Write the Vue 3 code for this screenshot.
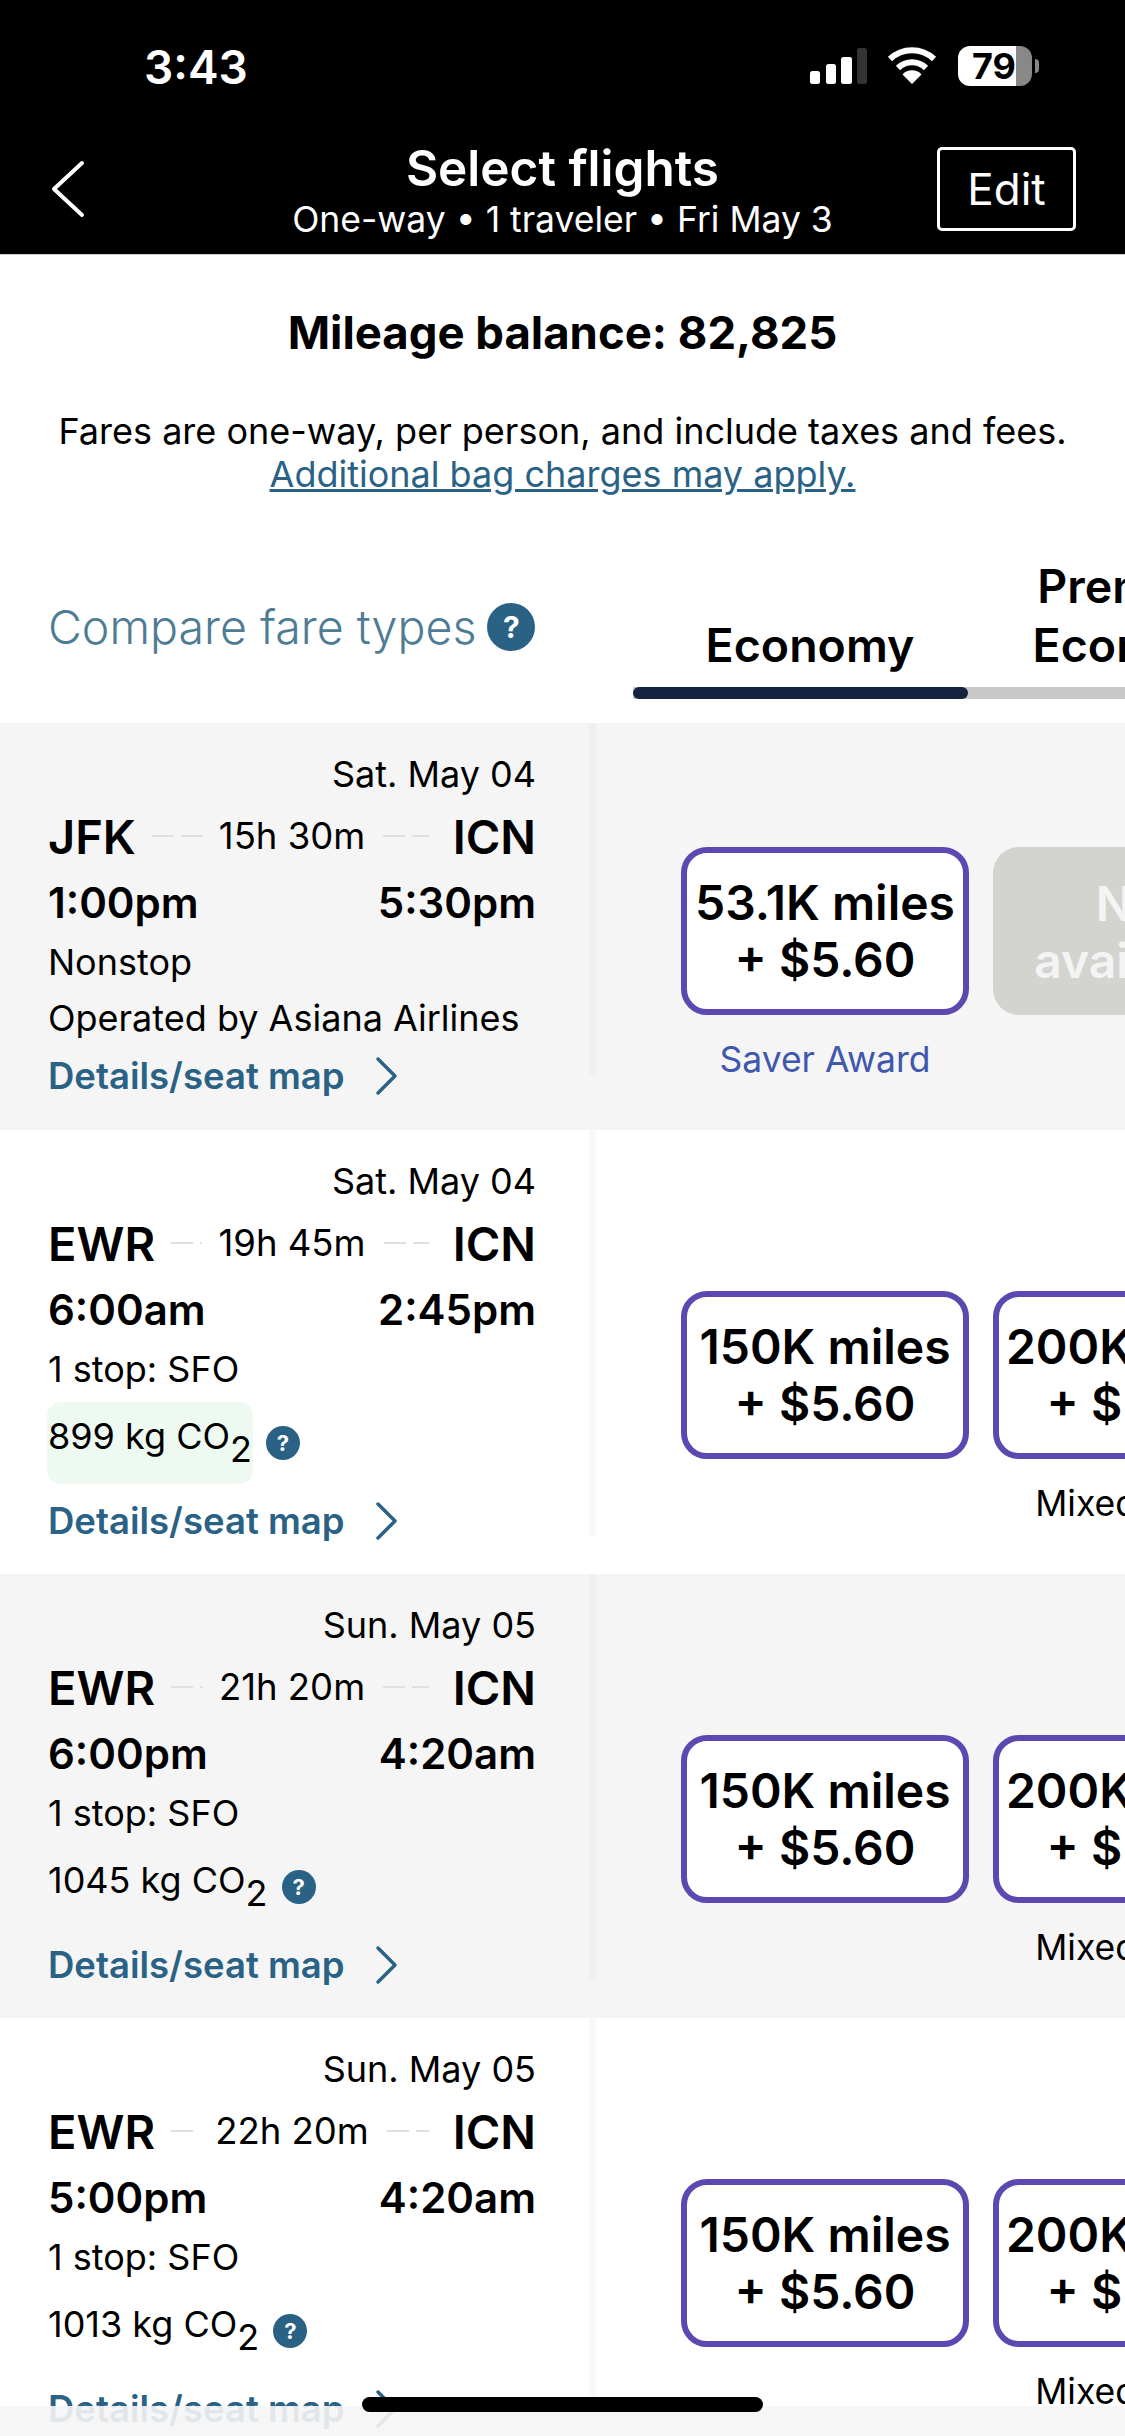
<script setup>
const flights = [
  { date: "Sat. May 04", from: "JFK", dur: "15h 30m", to: "ICN", dep: "1:00pm", arr: "5:30pm", stops: "Nonstop", operated: "Operated by Asiana Airlines",
    fares: [{ miles: "53.1K miles", label: "Saver Award", labelClass: "saver" }, { na: true }] },
  { date: "Sat. May 04", from: "EWR", dur: "19h 45m", to: "ICN", dep: "6:00am", arr: "2:45pm", stops: "1 stop: SFO", co2: "899", low: true,
    fares: [{ miles: "150K miles" }, { miles: "200K miles", label: "Mixed cabin" }] },
  { date: "Sun. May 05", from: "EWR", dur: "21h 20m", to: "ICN", dep: "6:00pm", arr: "4:20am", stops: "1 stop: SFO", co2: "1045",
    fares: [{ miles: "150K miles" }, { miles: "200K miles", label: "Mixed cabin" }] },
  { date: "Sun. May 05", from: "EWR", dur: "22h 20m", to: "ICN", dep: "5:00pm", arr: "4:20am", stops: "1 stop: SFO", co2: "1013",
    fares: [{ miles: "150K miles" }, { miles: "200K miles", label: "Mixed cabin" }] },
];
</script>

<template>
  <div class="page">
    <header class="top">
      <div class="status">
        <span class="clock">3:43</span>
        <div class="statusIcons">
          <svg class="signal" width="57" height="36" viewBox="0 0 57 36">
            <rect x="0" y="23" width="10" height="13" rx="2.5" fill="#fff" />
            <rect x="16" y="16" width="10" height="20" rx="2.5" fill="#fff" />
            <rect x="31" y="9" width="11" height="27" rx="2.5" fill="#fff" />
            <rect x="47" y="0" width="10" height="36" rx="2.5" fill="#333" />
          </svg>
          <svg class="wifi" width="50" height="37" viewBox="0 0 50 37">
            <path d="M3 12 A 32 32 0 0 1 47 12" fill="none" stroke="#fff" stroke-width="6" />
            <path d="M11 21 A 20 20 0 0 1 39 21" fill="none" stroke="#fff" stroke-width="6" />
            <path d="M25 37 L15.5 27.5 A 13 13 0 0 1 34.5 27.5 Z" fill="#fff" />
          </svg>
          <div class="battery">
            <div class="batteryBody"><span>79</span></div>
            <div class="batteryCap"></div>
          </div>
        </div>
      </div>
      <div class="nav">
        <svg class="back" width="34" height="58" viewBox="0 0 34 58">
          <path d="M31 3 L3 29 L31 55" fill="none" stroke="#fff" stroke-width="4" stroke-linecap="round" stroke-linejoin="round" />
        </svg>
        <div class="navTitle">
          <div class="title">Select flights</div>
          <div class="subtitle">One-way • 1 traveler • Fri May 3</div>
        </div>
        <div class="editWrap"><button class="edit">Edit</button></div>
      </div>
    </header>

    <section class="intro">
      <div class="balance">Mileage balance: 82,825</div>
      <p class="note">Fares are one-way, per person, and include taxes and fees.</p>
      <a class="bag">Additional bag charges may apply.</a>
    </section>

    <section class="tabsRow">
      <div class="compare">
        <span>Compare fare types</span>
        <span class="help bigHelp">?</span>
      </div>
      <div class="tabsCol">
        <div class="tabs">
          <div class="tab first">Economy</div>
          <div class="tab second">Premium<br />Economy</div>
        </div>
        <div class="bar"><div class="barFill"></div></div>
      </div>
    </section>

    <div
      v-for="(f, i) in flights"
      :key="i"
      :class="['row', i % 2 == 0 ? 'grey' : '', f.operated ? 'short' : '']"
    >
      <div class="info">
        <div class="date">{{ f.date }}</div>
        <div class="route">
          <div class="side">
            <span class="code">{{ f.from }}</span>
            <span class="dash"></span>
          </div>
          <span class="dur">{{ f.dur }}</span>
          <div class="side">
            <span class="dash dashRight"></span>
            <span class="code">{{ f.to }}</span>
          </div>
        </div>
        <div class="times"><span>{{ f.dep }}</span><span>{{ f.arr }}</span></div>
        <div class="line">{{ f.stops }}</div>
        <div v-if="f.operated" class="line">{{ f.operated }}</div>
        <div v-else class="co2Row">
          <div :class="['co2', f.low ? 'low' : '']">{{ f.co2 }} kg CO<span class="sub">2</span></div>
          <span class="help">?</span>
        </div>
        <div class="details">
          <span>Details/seat map</span>
          <svg width="24" height="40" viewBox="0 0 24 40">
            <path d="M3 3 L20 20 L3 37" fill="none" stroke="#2a6285" stroke-width="3.5" stroke-linecap="round" stroke-linejoin="round" />
          </svg>
        </div>
      </div>
      <div class="divider"></div>
      <div class="fares">
        <div v-for="(fare, j) in f.fares" :key="j" class="fare">
          <div v-if="fare.na" class="price na">Not<br />available</div>
          <div v-else class="price">{{ fare.miles }}<br />+ $5.60</div>
          <div :class="['fareLabel', fare.labelClass]">{{ fare.label }}</div>
        </div>
      </div>
    </div>

    <div class="bottomSheet"></div>
    <div class="homeBar"></div>
  </div>
</template>

<style scoped>
.page {
  position: relative;
  width: 1125px;
  height: 2436px;
  overflow: hidden;
  background: #fff;
  color: #000;
  font-family: Inter, "Liberation Sans", sans-serif;
}

.top {
  height: 255px;
  background: #000;
  color: #fff;
  border-bottom: 1px solid #ccc;
  box-sizing: border-box;
}

.status {
  height: 138px;
  display: flex;
  justify-content: space-between;
  padding: 46px 86px 0 144px;
  box-sizing: border-box;
}

.clock {
  font-size: 46px;
  font-weight: 600;
  line-height: 42px;
}

.statusIcons {
  display: flex;
  align-items: flex-start;
}

.signal {
  margin-top: 2px;
}

.wifi {
  margin-top: 1px;
  margin-left: 20px;
}

.battery {
  margin-left: 21px;
  display: flex;
  align-items: center;
}

.batteryBody {
  width: 74px;
  height: 40px;
  border-radius: 12px;
  background: linear-gradient(to right, #fff 58px, #888 58px);
  color: #000;
  font-size: 36px;
  font-weight: 700;
  line-height: 40px;
  padding-left: 14px;
  box-sizing: border-box;
}

.batteryCap {
  width: 4px;
  height: 14px;
  margin-left: 3px;
  border-radius: 0 4px 4px 0;
  background: #888;
}

.nav {
  display: grid;
  grid-template-columns: 1fr auto 1fr;
  align-items: start;
  padding: 0 49px;
}

.back {
  margin-top: 22px;
  margin-left: 2px;
}

.navTitle {
  text-align: center;
}

.title {
  font-size: 49.5px;
  font-weight: 600;
  line-height: 60px;
}

.subtitle {
  font-size: 35.5px;
  line-height: 44px;
  white-space: nowrap;
}

.editWrap {
  display: flex;
  justify-content: flex-end;
  margin-top: 9px;
}

.edit {
  width: 139px;
  height: 84px;
  background: none;
  border: 3px solid #fff;
  border-radius: 5px;
  color: #fff;
  font-family: inherit;
  font-size: 44px;
  padding: 0;
}

.intro {
  text-align: center;
  padding-top: 48px;
}

.balance {
  font-size: 45.5px;
  font-weight: 700;
  line-height: 60px;
}

.note {
  margin: 47px 0 0;
  font-size: 36px;
  line-height: 43px;
}

.bag {
  display: block;
  font-size: 36px;
  line-height: 43px;
  color: #2a6285;
  text-decoration: underline;
}

.tabsRow {
  display: flex;
  height: 227px;
}

.compare {
  width: 633px;
  flex-shrink: 0;
  box-sizing: border-box;
  padding: 34px 0 0 48px;
  display: flex;
  align-items: center;
  gap: 11px;
  font-size: 46.5px;
  font-weight: 300;
  color: #4f7c95;
}

.help {
  display: inline-flex;
  align-items: center;
  justify-content: center;
  width: 34px;
  height: 34px;
  border-radius: 50%;
  background: #2a6285;
  color: #fff;
  font-size: 22px;
  font-weight: 700;
  flex-shrink: 0;
}

.bigHelp {
  width: 48px;
  height: 48px;
  font-size: 30px;
}

.tabsCol {
  flex-shrink: 0;
  width: 492px;
  display: flex;
  flex-direction: column;
  justify-content: flex-end;
  padding-bottom: 24px;
  box-sizing: border-box;
}

.tabs {
  display: flex;
  align-items: flex-end;
  margin-bottom: 12px;
}

.tab {
  flex-shrink: 0;
  text-align: center;
  font-size: 46.5px;
  font-weight: 600;
  line-height: 59px;
}

.first {
  width: 354px;
}

.second {
  width: 300px;
}

.bar {
  height: 12px;
  background: #c8c8c8;
}

.barFill {
  width: 335px;
  height: 12px;
  background: #14233f;
  border-radius: 6px;
}

.row {
  display: flex;
  height: 444px;
  background: #fff;
}

.row.grey {
  background: #f5f5f5;
}

.row.short {
  height: 407px;
}

.info {
  width: 587px;
  flex-shrink: 0;
  box-sizing: border-box;
  padding: 25px 51px 0 48px;
}

.date {
  height: 52px;
  line-height: 52px;
  text-align: right;
  font-size: 36px;
}

.route {
  display: grid;
  grid-template-columns: 1fr auto 1fr;
  align-items: center;
  height: 72px;
}

.side {
  display: flex;
  align-items: center;
  min-width: 0;
}

.code {
  font-size: 47px;
  font-weight: 600;
}

.dur {
  font-size: 36.5px;
}

.dash {
  flex: 1;
  height: 2px;
  margin: 0 16px;
  background: repeating-linear-gradient(to right, #e0e0e0 0, #e0e0e0 22px, transparent 22px, transparent 29px);
}

.dashRight {
  margin: 0 24px 0 18px;
}

.times {
  display: flex;
  justify-content: space-between;
  height: 62px;
  line-height: 62px;
  font-size: 42px;
  font-weight: 600;
}

.line {
  height: 56px;
  line-height: 56px;
  font-size: 36px;
  white-space: nowrap;
}

.co2Row {
  display: flex;
  align-items: center;
  gap: 13px;
  height: 82px;
  margin-top: 5px;
}

.co2 {
  height: 82px;
  padding: 0 1px;
  margin-left: -1px;
  border-radius: 14px;
  line-height: 68px;
  font-size: 36px;
  white-space: nowrap;
}

.co2.low {
  width: 206px;
  box-sizing: border-box;
  background: #eef9f2;
}

.sub {
  font-size: 36px;
  position: relative;
  top: 13px;
}

.details {
  display: flex;
  align-items: center;
  gap: 30px;
  height: 58px;
  margin-top: 8px;
  color: #2a6285;
  font-size: 36.5px;
  font-weight: 600;
}

.row.short .details {
  margin-top: 1px;
}

.divider {
  width: 11px;
  flex-shrink: 0;
  margin-bottom: 38px;
  background: linear-gradient(to right, rgba(0, 0, 0, 0), rgba(0, 0, 0, 0.03) 50%, rgba(0, 0, 0, 0));
}

.row.short .divider {
  margin-bottom: 55px;
}

.fares {
  display: flex;
  align-items: flex-end;
  gap: 24px;
  padding: 0 0 45px 83px;
}

.fare {
  width: 288px;
  flex-shrink: 0;
}

.price {
  height: 168px;
  box-sizing: border-box;
  border: 6px solid #5c48b0;
  border-radius: 26px;
  background: #fff;
  display: flex;
  flex-direction: column;
  justify-content: center;
  text-align: center;
  font-size: 48px;
  font-weight: 600;
  line-height: 57px;
  white-space: nowrap;
}

.price.na {
  display: block;
  border: none;
  background: #d3d4cf;
  color: #f4f4f4;
  padding-top: 28px;
}

.fareLabel {
  height: 50px;
  margin-top: 20px;
  line-height: 50px;
  text-align: center;
  font-size: 35.5px;
}

.saver {
  color: #3f57ad;
}

.bottomSheet {
  position: absolute;
  left: 0;
  right: 0;
  bottom: 0;
  height: 30px;
  background: rgba(245, 245, 245, 0.9);
}

.homeBar {
  position: absolute;
  left: 362px;
  top: 2397px;
  width: 401px;
  height: 15px;
  border-radius: 8px;
  background: #000;
}
</style>
